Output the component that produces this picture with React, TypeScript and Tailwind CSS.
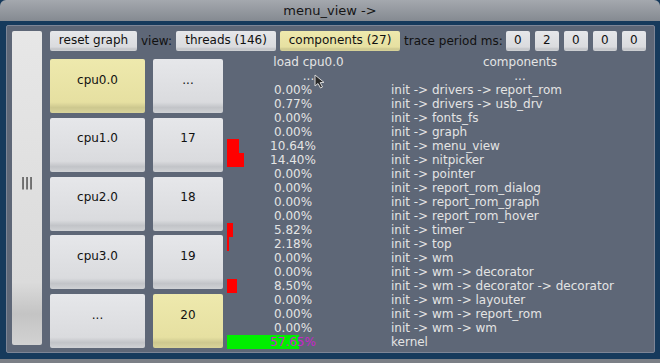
import React from "react";

type Row = { pct: string; bar: number; name: string };

const rows: Row[] = [
  { pct: "0.00%", bar: 0, name: "init -> drivers -> report_rom" },
  { pct: "0.77%", bar: 0, name: "init -> drivers -> usb_drv" },
  { pct: "0.00%", bar: 0, name: "init -> fonts_fs" },
  { pct: "0.00%", bar: 0, name: "init -> graph" },
  { pct: "10.64%", bar: 12, name: "init -> menu_view" },
  { pct: "14.40%", bar: 17, name: "init -> nitpicker" },
  { pct: "0.00%", bar: 0, name: "init -> pointer" },
  { pct: "0.00%", bar: 0, name: "init -> report_rom_dialog" },
  { pct: "0.00%", bar: 0, name: "init -> report_rom_graph" },
  { pct: "0.00%", bar: 0, name: "init -> report_rom_hover" },
  { pct: "5.82%", bar: 6, name: "init -> timer" },
  { pct: "2.18%", bar: 2, name: "init -> top" },
  { pct: "0.00%", bar: 0, name: "init -> wm" },
  { pct: "0.00%", bar: 0, name: "init -> wm -> decorator" },
  { pct: "8.50%", bar: 10, name: "init -> wm -> decorator -> decorator" },
  { pct: "0.00%", bar: 0, name: "init -> wm -> layouter" },
  { pct: "0.00%", bar: 0, name: "init -> wm -> report_rom" },
  { pct: "0.00%", bar: 0, name: "init -> wm -> wm" },
];

const cells = [
  ["cpu0.0", "...", true, false],
  ["cpu1.0", "17", false, false],
  ["cpu2.0", "18", false, false],
  ["cpu3.0", "19", false, false],
  ["...", "20", false, true],
] as const;

function Btn({ text, active = false, className = "" }: { text: string; active?: boolean; className?: string }) {
  const bg = active
    ? "bg-[linear-gradient(to_bottom,#eee9ad,#e6e0a1_80%,#cdc88f_90%,#d9d49a)]"
    : "bg-[linear-gradient(to_bottom,#e6e7ea,#dadbde_80%,#c2c4c8_90%,#d0d2d5)]";
  return (
    <div className={`flex items-center justify-center rounded-[2px] text-[#111] ${bg} ${className}`}>
      {text}
    </div>
  );
}

function Cursor() {
  return (
    <svg className="absolute left-[314px] top-[74px]" width="14" height="16" viewBox="0 0 14 16">
      <path d="M1 1 L1 12 L4 9.5 L6.5 14 L8.5 13 L6.2 8.6 L10 8.4 Z" fill="#2a2a2a" stroke="#d8d8d8" strokeWidth="1" />
    </svg>
  );
}

export default function App() {
  return (
    <div className="relative flex h-[363px] w-[660px] flex-col bg-[#163a5c] font-['DejaVu_Sans',sans-serif] text-[12px]">
      {/* window title */}
      <div className="flex h-[21px] items-center justify-center rounded-t-[6px] bg-[linear-gradient(to_bottom,#a4a8ae,#858a91)] text-[13px] text-[#151515]">
        menu_view -&gt;
      </div>

      <div className="flex-1 pl-[6px] pr-[5px] pt-[4px] pb-[6px]">
        <div className="flex h-[328px] gap-[8px] rounded-[2px] border border-[#7d8596] bg-[#5e6777] pl-[5px] pt-[5px]">
          <Btn text="|||" className="h-[314px] w-[30px] pb-[10px] text-black grayscale" />

          <div className="flex flex-col">
            {/* toolbar */}
            <div className="flex h-[20px] items-center gap-[4px]">
              <Btn text="reset graph" className="h-[20px] w-[87px] pb-[2px]" />
              <span className="pb-[1px] text-[#111]">view:</span>
              <Btn text="threads (146)" className="h-[20px] w-[100px] pb-[2px]" />
              <Btn text="components (27)" active className="h-[20px] w-[120px] pb-[2px]" />
              <span className="pb-[1px] text-[#111]">trace period ms:</span>
              <div className="ml-[-1px] flex gap-[5px]">
                {["0", "2", "0", "0", "0"].map((d, i) => (
                  <Btn key={i} text={d} className="h-[20px] w-[24px] pb-[2px]" />
                ))}
              </div>
            </div>

            <div className="mt-[4px] flex gap-[4px]">
              {/* cpu / thread grid */}
              <div className="mt-[4px] grid grid-cols-[95px_70px] gap-x-[8px] gap-y-[4px]">
                {cells.map(([a, b, ya, yb]) => (
                  <React.Fragment key={a + b}>
                    <Btn text={a} active={ya} className="h-[54px] pb-[13px]" />
                    <Btn text={b} active={yb} className="h-[54px] pb-[13px]" />
                  </React.Fragment>
                ))}
              </div>

              {/* load table */}
              <div className="flex flex-col leading-[14px] text-[#e4e4e4]">
                <div className="flex">
                  <div className="w-[163px] text-center">load cpu0.0</div>
                  <div className="ml-[1px] w-[258px] text-center">components</div>
                </div>
                <div className="flex">
                  <div className="w-[163px] text-center">...</div>
                  <div className="ml-[1px] w-[258px] text-center">...</div>
                </div>
                {rows.map((r, i) => (
                  <div key={i} className="flex h-[14px]">
                    <div className="grid w-[163px]">
                      <div className="col-start-1 row-start-1 h-[14px] bg-[#ff0000]" style={{ width: r.bar }} />
                      <div className="col-start-1 row-start-1 w-[132px] text-center">{r.pct}</div>
                    </div>
                    <div className="ml-[1px] whitespace-pre">{r.name}</div>
                  </div>
                ))}
                <div className="flex h-[14px]">
                  <div className="grid w-[163px]">
                    <div className="col-start-1 row-start-1 h-[14px] w-[72px] bg-[#00ee00]" />
                    <div className="col-start-1 row-start-1 w-[132px] text-center text-[#cc22cc]">57.65%</div>
                  </div>
                  <div className="ml-[1px]">kernel</div>
                </div>
              </div>
            </div>
          </div>
        </div>
      </div>

      <div className="h-[4px] bg-[#7b7f86]" />
      <Cursor />
    </div>
  );
}
